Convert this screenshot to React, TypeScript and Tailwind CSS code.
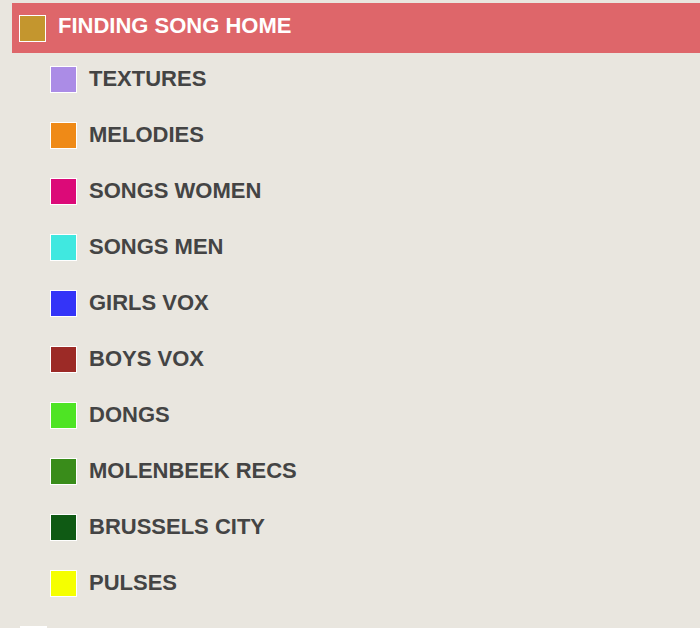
const items = [
  { label: "TEXTURES", color: "bg-[#ab8ce6]" },
  { label: "MELODIES", color: "bg-[#ef8a17]" },
  { label: "SONGS WOMEN", color: "bg-[#dc0a78]" },
  { label: "SONGS MEN", color: "bg-[#40e8e0]" },
  { label: "GIRLS VOX", color: "bg-[#3434f8]" },
  { label: "BOYS VOX", color: "bg-[#9c2a26]" },
  { label: "DONGS", color: "bg-[#4ee424]" },
  { label: "MOLENBEEK RECS", color: "bg-[#398c1a]" },
  { label: "BRUSSELS CITY", color: "bg-[#0f5a14]" },
  { label: "PULSES", color: "bg-[#f5ff00]" },
];

function Swatch({ color }: { color: string }) {
  return <span className={`w-[27px] h-[27px] shrink-0 border border-white ${color}`} />;
}

export default function App() {
  return (
    <div className="min-h-[628px] h-[628px] overflow-hidden bg-[#e9e6df] pt-[3px] font-['Liberation_Sans',Arial,sans-serif] font-bold text-[22px] leading-none">
      <div className="ml-[12px] h-[50px] bg-[#de666a] flex items-center pl-[7px] gap-[12px] text-white">
        <Swatch color="bg-[#c4962e]" />
        <span className="-mt-[4px]">FINDING SONG HOME</span>
      </div>
      <ul className="pt-[13px] pl-[50px] flex flex-col gap-[29px] text-[#444444]">
        {items.map((it) => (
          <li key={it.label} className="flex items-center gap-[12px] h-[27px]">
            <Swatch color={it.color} />
            <span className="-mt-[1px]">{it.label}</span>
          </li>
        ))}
      </ul>
      <div className="ml-[12px] mt-[17px] h-[50px] flex items-center pl-[8px] gap-[12px]">
        <Swatch color="bg-white" />
      </div>
    </div>
  );
}
